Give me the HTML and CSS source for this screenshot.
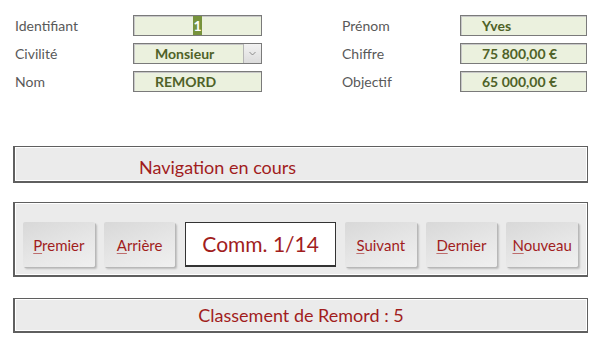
FILE: index.html
```html
<!DOCTYPE html>
<html lang="fr">
  <head>
    <meta charset="UTF-8" />
    <title>Commerciaux</title>
    <link rel="stylesheet" href="styles.css">
  </head>
  <body>
    <div class="fiche">
      <div class="label">Identifiant</div>
      <div class="champ centre"><span class="selection">1</span></div>
      <div></div>
      <div class="label">Prénom</div>
      <div class="champ">Yves</div>

      <div class="label">Civilité</div>
      <div class="champ liste">
        <span class="valeur">Monsieur</span>
        <span class="fleche">
          <svg width="7" height="5" viewBox="0 0 7 5"><path d="M0.5 1 L3.5 4 L6.5 1" fill="none" stroke="#777" stroke-width="0.8"/></svg>
        </span>
      </div>
      <div></div>
      <div class="label">Chiffre</div>
      <div class="champ">75 800,00 €</div>

      <div class="label">Nom</div>
      <div class="champ">REMORD</div>
      <div></div>
      <div class="label">Objectif</div>
      <div class="champ">65 000,00 €</div>
    </div>

    <div class="bandeau etat">Navigation en cours</div>

    <div class="bandeau navigation">
      <button class="bouton"><u>P</u>remier</button>
      <button class="bouton"><u>A</u>rrière</button>
      <div class="compteur">Comm. 1/14</div>
      <button class="bouton"><u>S</u>uivant</button>
      <button class="bouton"><u>D</u>ernier</button>
      <button class="bouton"><u>N</u>ouveau</button>
    </div>

    <div class="bandeau classement">Classement de Remord : 5</div>
  </body>
</html>
```

FILE: styles.css
```css
*{
    box-sizing: border-box;
    margin: 0;
    padding: 0;
}
body{
    font-family: Lato, "Open Sans", sans-serif;
    background-color: #fff;
    width: 600px;
    height: 346px;
    overflow: hidden;
}
.fiche{
    display: grid;
    grid-template-columns: 118px 129px 80px 118px 127px;
    grid-auto-rows: 21px;
    row-gap: 7px;
    padding: 15px 0 0 15px;
}
.label{
    font-size: 14px;
    color: #595959;
    line-height: 21px;
}
.champ{
    background-color: #ebf1de;
    border: 1px solid #7a7a7a;
    box-shadow: inset 1px 1px 0 #c8c8c8;
    color: #4f6228;
    font-weight: 700;
    font-size: 14px;
    line-height: 19px;
    padding-left: 21px;
    white-space: nowrap;
}
.champ.centre{
    padding-left: 0;
    text-align: center;
}
.selection{
    display: inline-block;
    background-color: #77933c;
    color: #fff;
    width: 9px;
    height: 19px;
}
.champ.liste{
    display: flex;
    padding-left: 0;
}
.liste .valeur{
    flex: 1;
    padding-left: 21px;
}
.liste .fleche{
    width: 18px;
    background: linear-gradient(#f2f2f2, #dcdcdc);
    border-left: 1px solid #b5b5b5;
    display: flex;
    align-items: center;
    justify-content: center;
}
.bandeau{
    margin-left: 13px;
    width: 575px;
    background-color: #ebebeb;
    border: 2px solid #5f5f5f;
    border-top-width: 1px;
    border-right-width: 1px;
    box-shadow: inset 1px 1px 0 #fff, inset -1px -1px 0 #fff;
    color: #a11d1d;
}
.etat{
    margin-top: 54px;
    height: 37px;
    font-size: 18px;
    line-height: 34px;
    padding: 3px 0 0 124px;
}
.navigation{
    margin-top: 19px;
    height: 75px;
    display: flex;
    align-items: flex-start;
    padding: 19px 0 0 8px;
}
.bouton{
    font-family: inherit;
    width: 72px;
    height: 45px;
    margin-right: 9px;
    border: none;
    border-radius: 2px;
    background: linear-gradient(160deg, #d8d8d8 0%, #e6e6e6 55%, #f0f0f0 100%);
    box-shadow: 1px 1px 0 #b8b8b8, 2px 2px 2px rgba(0, 0, 0, 0.2);
    color: #a11d1d;
    font-size: 15px;
    cursor: pointer;
}
.bouton u{
    text-decoration-thickness: 1px;
    text-decoration-color: rgba(161, 29, 29, 0.6);
    text-underline-offset: 2px;
}
.compteur{
    width: 151px;
    height: 45px;
    margin-right: 9px;
    margin-left: 1px;
    background-color: #fff;
    border: 1px solid #333;
    border-width: 1px 1px 2px 1px;
    color: #a11d1d;
    font-size: 21px;
    line-height: 42px;
    text-align: center;
}
.classement{
    margin-top: 21px;
    height: 35px;
    font-size: 18px;
    line-height: 32px;
    text-align: center;
}
```
